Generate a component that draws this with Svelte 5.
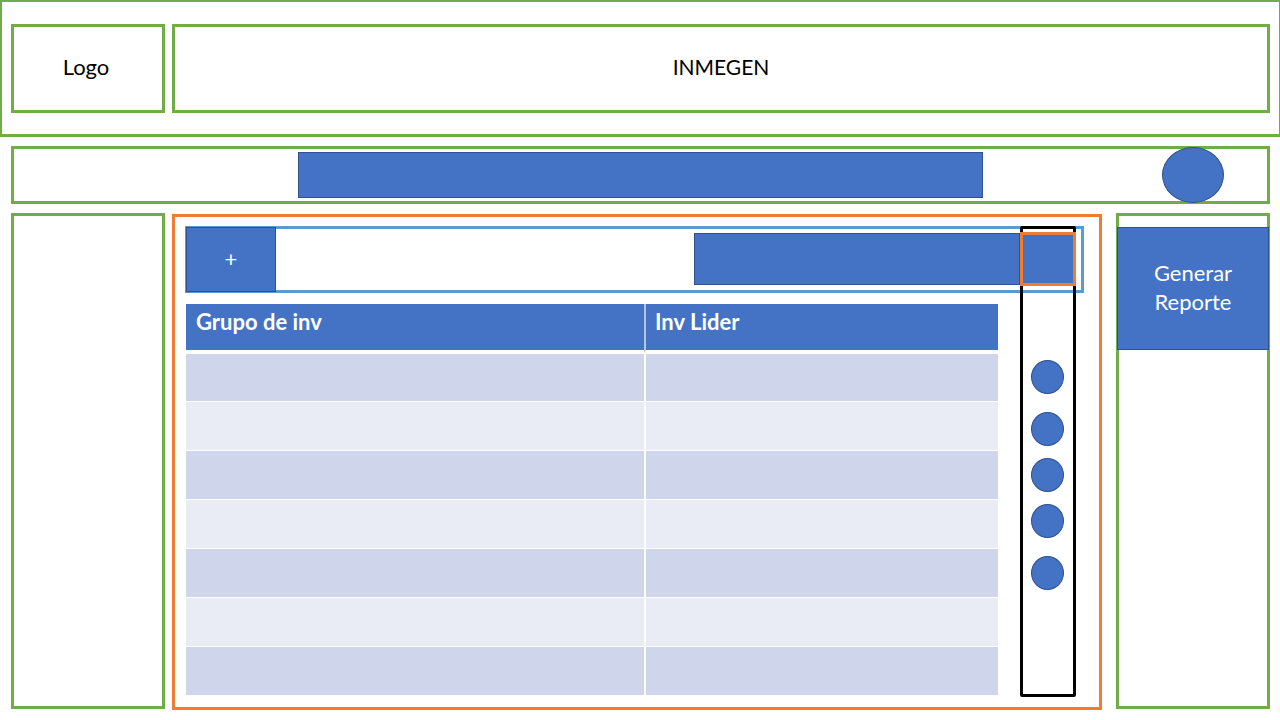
<script>
  const columns = ['Grupo de inv', 'Inv Lider'];
  const rows = Array.from({ length: 7 }, () => ['', '']);
  const actionGroups = [[1], [2, 3, 4], [5]];

  let sectionQuery = $state('');
  let groupQuery = $state('');
</script>

<div class="page">
  <header class="header">
    <div class="box">Logo</div>
    <div class="box title">INMEGEN</div>
  </header>

  <div class="body">
    <nav class="topbar" aria-label="Principal">
      <input class="fill field" type="text" aria-label="Buscar sección" bind:value={sectionQuery} />
      <button class="fill round profile" type="button" aria-label="Perfil"></button>
    </nav>

    <div class="columns">
      <aside class="side"></aside>

      <main class="content">
        <div class="toolbar">
          <button class="fill add" type="button">+</button>
          <div class="search">
            <input class="fill field" type="text" aria-label="Buscar grupo" bind:value={groupQuery} />
            <button class="go" type="button" aria-label="Buscar"></button>
          </div>
        </div>

        <table>
          <thead>
            <tr>
              {#each columns as column}
                <th scope="col">{column}</th>
              {/each}
            </tr>
          </thead>
          <tbody>
            {#each rows as row}
              <tr>
                {#each row as cell}
                  <td>{cell}</td>
                {/each}
              </tr>
            {/each}
          </tbody>
        </table>

        <div class="rail">
          {#each actionGroups as group}
            <div class="group">
              {#each group as n}
                <button class="fill round dot" type="button" aria-label={`Acción ${n}`}></button>
              {/each}
            </div>
          {/each}
        </div>
      </main>

      <aside class="side">
        <button class="fill report" type="button">Generar Reporte</button>
      </aside>
    </div>
  </div>
</div>

<style>
  :global(body) {
    background: #fff;
  }

  .page {
    --green: #70ad47;
    --blue: #4472c4;
    --navy: #2f528f;
    --orange: #ed7d31;
    font-family: Lato, 'Open Sans', sans-serif;
    font-size: 22px;
    line-height: 29px;
    color: #000;
  }

  .page * {
    box-sizing: border-box;
  }

  button,
  input {
    margin: 0;
    padding: 0;
    font: inherit;
    color: #fff;
    border-radius: 0;
  }

  button {
    cursor: pointer;
  }

  .fill {
    background: var(--blue);
    border: 1px solid var(--navy);
  }

  .round {
    border-radius: 50%;
  }

  .field {
    min-width: 0;
    padding: 0 10px;
  }

  .header {
    display: grid;
    grid-template-columns: 154px 1fr;
    gap: 7px;
    padding: 22px 9px 21px;
    border: solid var(--green);
    border-width: 2px 1px 3px 2px;
  }

  .box {
    display: flex;
    align-items: center;
    justify-content: center;
    height: 89px;
    padding: 0 4px 4px 0;
    border: 3px solid var(--green);
  }

  .title {
    padding: 0 0 4px;
    font-size: 21px;
  }

  .body {
    padding: 9px 10px 10px 11px;
  }

  .topbar {
    display: grid;
    grid-template-columns: 284fr 685fr 284fr;
    align-items: center;
    height: 58px;
    border: 3px solid var(--green);
  }

  .topbar .field {
    grid-column: 2;
    height: 46px;
  }

  .profile {
    justify-self: end;
    width: 62px;
    height: 56px;
    margin: -2px 43px -2px 0;
  }

  .columns {
    display: grid;
    grid-template-columns: 154px 1fr 154px;
    margin-top: 9px;
  }

  .side {
    padding-top: 11px;
    margin-bottom: 1px;
    border: 3px solid var(--green);
  }

  .content {
    display: grid;
    grid-template-columns: 1fr 56px 8px;
    row-gap: 11px;
    margin: 1px 14px 0 7px;
    padding: 9px 15px 10px 10px;
    border: 3px solid var(--orange);
  }

  .toolbar {
    grid-area: 1 / 1 / 2 / 4;
    display: flex;
    align-items: center;
    justify-content: space-between;
    height: 67px;
    padding-right: 5px;
    border: 3px solid #5b9bd5;
  }

  .add {
    width: 90px;
    height: 65px;
    margin: -2px;
    padding-bottom: 2px;
  }

  .search {
    display: flex;
    align-items: center;
    width: 43%;
    padding-bottom: 1px;
  }

  .search .field {
    flex: 1;
    height: 52px;
  }

  .go {
    z-index: 2;
    width: 56px;
    height: 54px;
    background: var(--blue);
    border: 3px solid var(--orange);
  }

  table {
    grid-area: 2 / 1;
    width: auto;
    margin: 0 22px 1px 1px;
    border-spacing: 0;
    table-layout: fixed;
  }

  th,
  td {
    height: 49px;
    padding: 0 9px;
    text-align: left;
    vertical-align: top;
    border-bottom: 1px solid #fff;
  }

  th {
    padding: 3px 9px 0 10px;
    font-weight: 700;
    color: #fff;
    background: var(--blue);
    border-bottom-width: 3px;
  }

  th:first-child {
    width: 458px;
  }

  th + th,
  td + td {
    border-left: 2px solid #fff;
  }

  th + th {
    padding-left: 9px;
    border-left-color: #b4c7e7;
  }

  td {
    background: #e9ebf5;
  }

  tr:nth-child(odd) td {
    background: #cfd5ea;
  }

  tbody tr:first-child td {
    border-top: 1px solid #fff;
  }

  .rail {
    grid-area: 1 / 2 / 3 / 3;
    z-index: 1;
    display: flex;
    flex-direction: column;
    align-items: center;
    gap: 18px;
    padding: 131px 1px 0 0;
    border: 3px solid #000;
    border-radius: 2px;
    pointer-events: none;
  }

  .group {
    display: grid;
    gap: 12px;
  }

  .dot {
    width: 33px;
    height: 34px;
    pointer-events: auto;
  }

  .report {
    display: block;
    width: calc(100% + 4px);
    height: 123px;
    margin: 0 -2px;
    padding: 0 32px 4px;
  }
</style>
